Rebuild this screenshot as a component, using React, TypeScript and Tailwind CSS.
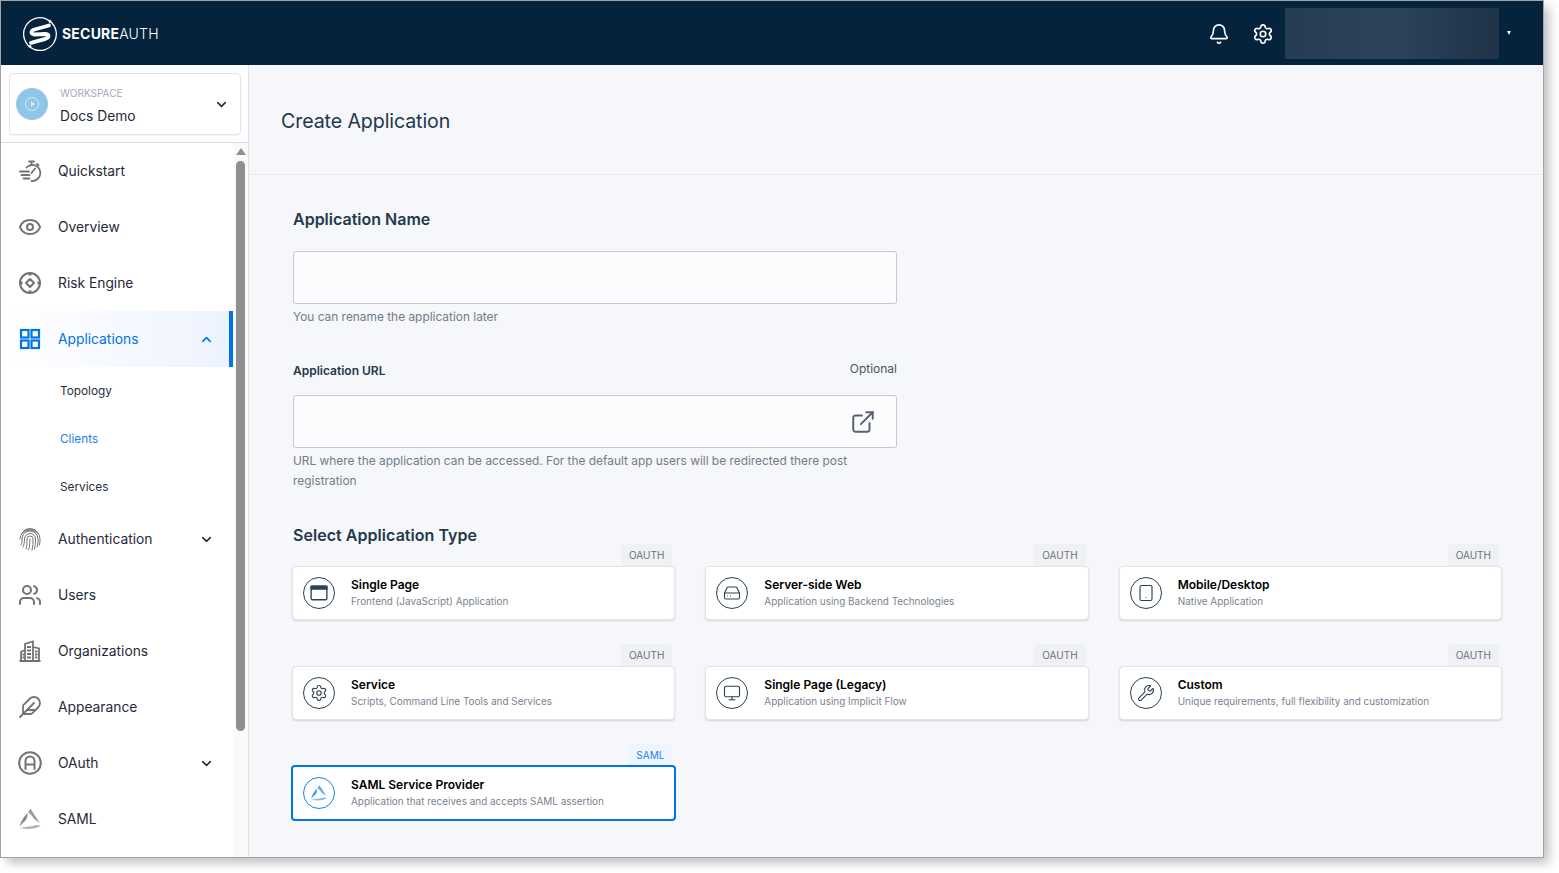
import React from "react";
import { Bell, Settings, Eye, ChevronDown, ChevronUp, Users, Feather, ExternalLink, Wrench, Monitor, Tablet, HardDrive } from "lucide-react";

const I = ({ children, className = "" }: { children: React.ReactNode; className?: string }) => (
  <svg viewBox="0 0 24 24" fill="none" stroke="currentColor" strokeWidth={2} strokeLinecap="round" strokeLinejoin="round" className={className}>{children}</svg>
);

const Logo = () => (
  <svg viewBox="0 0 36 36" className="w-9 h-9 shrink-0" fill="none">
    <path d="M24 2.800 A16.500 16.500 0 0 0 4 9.500 A16.500 16.500 0 0 0 12 33.300" stroke="white" strokeWidth="1.300" />
    <path d="M12 33.300 A16.500 16.500 0 0 0 32 26.500 A16.500 16.500 0 0 0 24 2.800" stroke="white" strokeWidth="1.300" />
    <path d="M27 9.500 L12.500 13.500 C8.500 14.800 8.500 18 12.500 18.500 L23.500 18 C27.500 18.500 27.500 21.500 23.500 22.800 L9 26.800" stroke="white" strokeWidth="3.800" strokeLinecap="round" strokeLinejoin="round" />
    <circle cx="28" cy="5.500" r="1.400" fill="white" />
    <circle cx="8" cy="30.500" r="1.400" fill="white" />
  </svg>
);

const Quickstart = () => (
  <I className="w-6 h-6">
    <path d="M11 2.500h5M13.500 2.500v3M19 5l1.500 1.500" strokeWidth={1.800} />
    <path d="M8.500 8.500a8 8 0 1 1 5 13.500" strokeWidth={1.800} />
    <path d="M13.500 14l3.500-4.500" strokeWidth={1.800} />
    <path d="M2 12.500h9M3.500 16h8M5.500 19.500h6" strokeWidth={1.800} />
  </I>
);

const Risk = () => (
  <I className="w-6 h-6">
    <circle cx="12" cy="12" r="10" />
    <path d="M12 8l4 4-4 4-4-4z" />
    <path d="M12 2v2.500M12 19.500V22M2 12h2.500M19.500 12H22" strokeWidth={3} strokeLinecap="butt" />
  </I>
);

const Grid4 = () => (
  <svg viewBox="0 0 24 24" fill="none" stroke="currentColor" strokeWidth={2.200} className="w-6 h-6">
    <rect x="3" y="3" width="7.500" height="7.500" />
    <rect x="13.500" y="3" width="7.500" height="7.500" />
    <rect x="3" y="13.500" width="7.500" height="7.500" />
    <rect x="13.500" y="13.500" width="7.500" height="7.500" />
  </svg>
);

const FingerprintRings = () => (
  <svg viewBox="0 0 24 24" fill="none" stroke="currentColor" strokeWidth={1} strokeLinecap="round" className="w-6 h-6">
    <path d="M6 3.500a11 11 0 0 1 12 0" />
    <path d="M3.500 7a11 11 0 0 1 17 0" />
    <path d="M2 12a10 10 0 0 1 20 0c0 2 0 4-.5 6" />
    <path d="M3 18c1-2 1-4 1-6a8 8 0 0 1 16 0c0 3 0 5-.8 8" />
    <path d="M5 20c1-2 1.500-5 1.500-8a5.500 5.500 0 0 1 11 0c0 4-.2 7-1.200 10" />
    <path d="M8 22c1-3 1-6 1-10a3 3 0 0 1 6 0c0 4 0 7-1 11" />
    <path d="M12 12c0 4-.2 8-1.500 11" />
  </svg>
);

const Org = () => (
  <svg viewBox="0 0 24 24" fill="none" stroke="currentColor" strokeWidth={1.800} className="w-6 h-6">
    <path d="M1.500 22h21M3 22v-9l4-2v11M7 22V5l8-2.500V22M15 8l6 1.500V22" />
    <path d="M9 8h4M9 11.500h4M9 15h4M9 18.500h4M17 12.500h2.500M17 15.500h2.500M17 18.500h2.500M4.500 15.500h1.500M4.500 18.500h1.500" />
  </svg>
);

const OAuthIcon = () => (
  <I className="w-6 h-6">
    <circle cx="12" cy="12" r="10.800" />
    <path d="M7.500 18V10a4.500 4.500 0 0 1 9 0v8M7.500 13.500h9" strokeWidth={2} />
  </I>
);

const Saml = ({ className = "w-6 h-6" }: { className?: string }) => (
  <svg viewBox="0 0 24 24" fill="currentColor" className={className}>
    <path d="M12.500 1.500 C15 6 19 11 22 16.500 C20 14.500 17.500 13 16 12 C15 9.500 12.500 7 10 5.500 Z" opacity=".7" />
    <path d="M22.500 19 C17 22 9 23 2 20.800 C5 20.500 10 19.500 15 19 C17.500 18 20 17.500 22.500 19 Z" opacity=".55" />
    <path d="M1.500 19.500 C3 14.500 5.500 9.500 9.500 6 C9.500 9 9 11.500 7.500 13.500 C5.500 15 3.500 17.500 1.500 19.500 Z" opacity=".85" />
  </svg>
);

const Nav = ({ label, icon, chevron, active }: { label: string; icon: React.ReactNode; chevron?: "up" | "down"; active?: boolean }) => (
  <div className={`flex items-center h-14 pl-[17px] pr-[17px] ${active ? "bg-gradient-to-r from-white to-[#edf3fe] border-r-4 border-[#0073e6] text-[#0073e6]" : "text-[#1f2a37]"}`}>
    <span className={`w-6 h-6 shrink-0 ${active ? "text-[#0073e6]" : "text-[#737373]"}`}>{icon}</span>
    <span className="ml-[16px] flex-1 text-[13.800px]">{label}</span>
    {chevron === "down" && <ChevronDown className="w-[15px] h-[15px] mr-[2px] text-[#1f2a37]" strokeWidth={2.500} />}
    {chevron === "up" && <ChevronUp className="w-[15px] h-[15px] -mr-[2px] text-[#0073e6]" strokeWidth={2.500} />}
  </div>
);

const Sub = ({ label, active }: { label: string; active?: boolean }) => (
  <div className={`h-12 flex items-center pl-[59px] pt-[2px] text-[11.800px] ${active ? "text-[#1a82ed]" : "text-[#27303c]"}`}>{label}</div>
);

const AppCard = ({ title, desc, tag, icon, selected }: { title: string; desc: string; tag: string; icon: React.ReactNode; selected?: boolean }) => (
  <div className="flex flex-col">
    <div className="flex justify-end pr-[3px]">
      <span className={`h-[22px] px-[8px] rounded-t-[3px] flex items-center text-[10px] ${selected ? "bg-[#eff5fd] text-[#1a82ed]" : "bg-[#f0f1f4] text-[#6a7280]"}`}>{tag}</span>
    </div>
    <div className={`rounded-[4px] bg-white flex items-center ${selected ? "h-[56px] -mt-px -mx-px border-2 border-[#0073e6] pl-[10px]" : "h-[54px] border border-[#e2e4e8] shadow-[0_1px_2px_rgba(0,0,0,0.14)] pl-[10px]"}`}>
      <span className={`w-8 h-8 rounded-full border flex items-center justify-center shrink-0 ${selected ? "border-[#1a82ed] text-[#1a82ed]" : "border-[#2c4257] text-[#2c4257]"}`}>{icon}</span>
      <div className="ml-4 flex flex-col">
        <span className="text-[12px] leading-[15px] font-semibold text-black">{title}</span>
        <span className="mt-px text-[9.950px] leading-[16px] text-[#7a8291]">{desc}</span>
      </div>
    </div>
  </div>
);

export default function App() {
  return (
    <div className="w-[1559px] h-[873px] bg-white overflow-hidden pt-px pl-px font-['Inter',sans-serif]">
      <div className="w-[1542px] h-[856px] bg-[#f5f7fa] flex flex-col overflow-hidden shadow-[0_0_0_1px_#a3a3a3,6px_6px_10px_rgba(0,0,0,0.25)]">
        <header className="h-16 shrink-0 bg-[#05233d] flex items-center">
          <div className="ml-[21px] mt-px flex items-center">
            <Logo />
            <span className="ml-[4px] text-white text-[14px] tracking-[0.2px] font-bold">SECURE<span className="font-light">AUTH</span></span>
          </div>
          <div className="ml-auto flex items-center">
            <Bell className="mt-px w-[22px] h-[22px] text-white" strokeWidth={1.800} />
            <Settings className="mt-px w-[22px] h-[22px] text-white ml-[22px]" strokeWidth={1.800} />
            <div className="ml-[11px] w-[214px] h-[51px] bg-gradient-to-r from-[#253c52] via-[#2c4359] to-[#1f3349]" />
            <span className="ml-2 mr-[32px] w-0 h-0 border-l-[2.500px] border-r-[2.500px] border-t-[4px] border-l-transparent border-r-transparent border-t-white" />
          </div>
        </header>

        <div className="flex flex-1 min-h-0">
          <aside className="w-[248px] shrink-0 bg-white border-r border-[#e0e2e6] flex flex-col">
            <div className="h-[78px] shrink-0 border-b border-[#dcdfe4] pt-2 pl-2 pr-[7px]">
              <div className="h-[62px] rounded-[4px] border border-[#e2e4e8] shadow-[0_1px_1px_rgba(0,0,0,0.05)] flex items-center pl-[6px] pr-[11px]">
                <span className="w-8 h-8 rounded-full bg-[#8ec6e6] flex items-center justify-center">
                  <span className="w-[14px] h-[14px] rounded-full border border-[#d8ecf7] flex items-center justify-center">
                    <span className="w-0 h-0 border-y-[3px] border-y-transparent border-l-[4px] border-l-[#d8ecf7] ml-px" />
                  </span>
                </span>
                <div className="ml-3 flex-1 flex flex-col pt-[4px]">
                  <span className="text-[10px] leading-[14px] text-[#a3a8c2]">WORKSPACE</span>
                  <span className="text-[13.800px] leading-[20px] mt-[6px] text-[#1f2a37]">Docs Demo</span>
                </div>
                <ChevronDown className="w-[15px] h-[15px] text-[#1f2a37]" strokeWidth={2.500} />
              </div>
            </div>
            <div className="flex-1 flex min-h-0">
              <div className="w-[232px] shrink-0">
                <Nav label="Quickstart" icon={<Quickstart />} />
                <Nav label="Overview" icon={<Eye className="w-6 h-6" strokeWidth={2} />} />
                <Nav label="Risk Engine" icon={<Risk />} />
                <Nav label="Applications" icon={<Grid4 />} chevron="up" active />
                <Sub label="Topology" />
                <Sub label="Clients" active />
                <Sub label="Services" />
                <Nav label="Authentication" icon={<FingerprintRings />} chevron="down" />
                <Nav label="Users" icon={<Users className="w-6 h-6" strokeWidth={2} />} />
                <Nav label="Organizations" icon={<Org />} />
                <Nav label="Appearance" icon={<Feather className="w-6 h-6" strokeWidth={1.800} />} />
                <Nav label="OAuth" icon={<OAuthIcon />} chevron="down" />
                <Nav label="SAML" icon={<Saml />} />
              </div>
              <div className="flex-1 bg-[#fafafa] flex flex-col items-center pt-[5px]">
                <span className="w-0 h-0 border-l-[5px] border-r-[5px] border-b-[7px] border-l-transparent border-r-transparent border-b-[#8f8f8f]" />
                <span className="mt-[6px] w-[9px] h-[570px] rounded-[5px] bg-[#8f8f8f]" />
              </div>
            </div>
          </aside>

          <main className="flex-1 min-w-0">
            <div className="h-[110px] border-b border-[#e8eaee] flex items-center pl-8 pt-[4px]">
              <h1 className="text-[19.600px] text-[#24384c] tracking-[-0.1px]">Create Application</h1>
            </div>
            <div className="pl-11 pt-[32px]">
              <h2 className="text-[16px] leading-6 font-semibold text-[#24384c]">Application Name</h2>
              <div className="mt-5 w-[604px] h-[53px] rounded-[3px] bg-[#fcfcfe] border border-[#c6c8cc]" />
              <p className="mt-[3px] text-[11.900px] leading-5 text-[#747b87]">You can rename the application later</p>
              <div className="mt-[31px] w-[604px] h-[23px] flex justify-between">
                <span className="text-[12px] leading-[26px] font-semibold text-[#24384c]">Application URL</span>
                <span className="text-[12px] leading-[22px] text-[#4a5563]">Optional</span>
              </div>
              <div className="mt-[14px] w-[604px] h-[53px] rounded-[3px] bg-[#fcfcfe] border border-[#c6c8cc] flex items-center justify-end pr-[20px]">
                <ExternalLink className="w-[26px] h-[26px] text-[#566271]" strokeWidth={1.800} />
              </div>
              <p className="mt-[3px] w-[604px] text-[11.900px] leading-5 text-[#747b87]">URL where the application can be accessed. For the default app users will be redirected there post registration</p>
              <h2 className="mt-[32px] text-[16px] leading-6 font-semibold text-[#24384c] tracking-[0.05px]">Select Application Type</h2>
              <div className="-mt-[3px] -ml-px w-[1210px] grid grid-cols-3 gap-x-[30px] gap-y-6">
                <AppCard title="Single Page" desc="Frontend (JavaScript) Application" tag="OAUTH" icon={
                  <svg viewBox="0 0 16 16" className="w-[18px] h-[18px]" fill="none" stroke="currentColor" strokeWidth="1.200"><rect x="1" y="2" width="14" height="12" rx="1.200" /><rect x="1" y="2" width="14" height="2.500" fill="currentColor" /></svg>
                } />
                <AppCard title="Server-side Web" desc="Application using Backend Technologies" tag="OAUTH" icon={<HardDrive className="w-[18px] h-[18px]" strokeWidth={1.500} />} />
                <AppCard title="Mobile/Desktop" desc="Native Application" tag="OAUTH" icon={<Tablet className="w-[18px] h-[18px]" strokeWidth={1.500} />} />
                <AppCard title="Service" desc="Scripts, Command Line Tools and Services" tag="OAUTH" icon={<Settings className="w-[18px] h-[18px]" strokeWidth={1.500} />} />
                <AppCard title="Single Page (Legacy)" desc="Application using Implicit Flow" tag="OAUTH" icon={<Monitor className="w-[18px] h-[18px]" strokeWidth={1.500} />} />
                <AppCard title="Custom" desc="Unique requirements, full flexibility and customization" tag="OAUTH" icon={<Wrench className="w-[18px] h-[18px]" strokeWidth={1.500} />} />
                <AppCard title="SAML Service Provider" desc="Application that receives and accepts SAML assertion" tag="SAML" selected icon={<Saml className="w-[18px] h-[18px]" />} />
              </div>
            </div>
          </main>
        </div>
      </div>
    </div>
  );
}
